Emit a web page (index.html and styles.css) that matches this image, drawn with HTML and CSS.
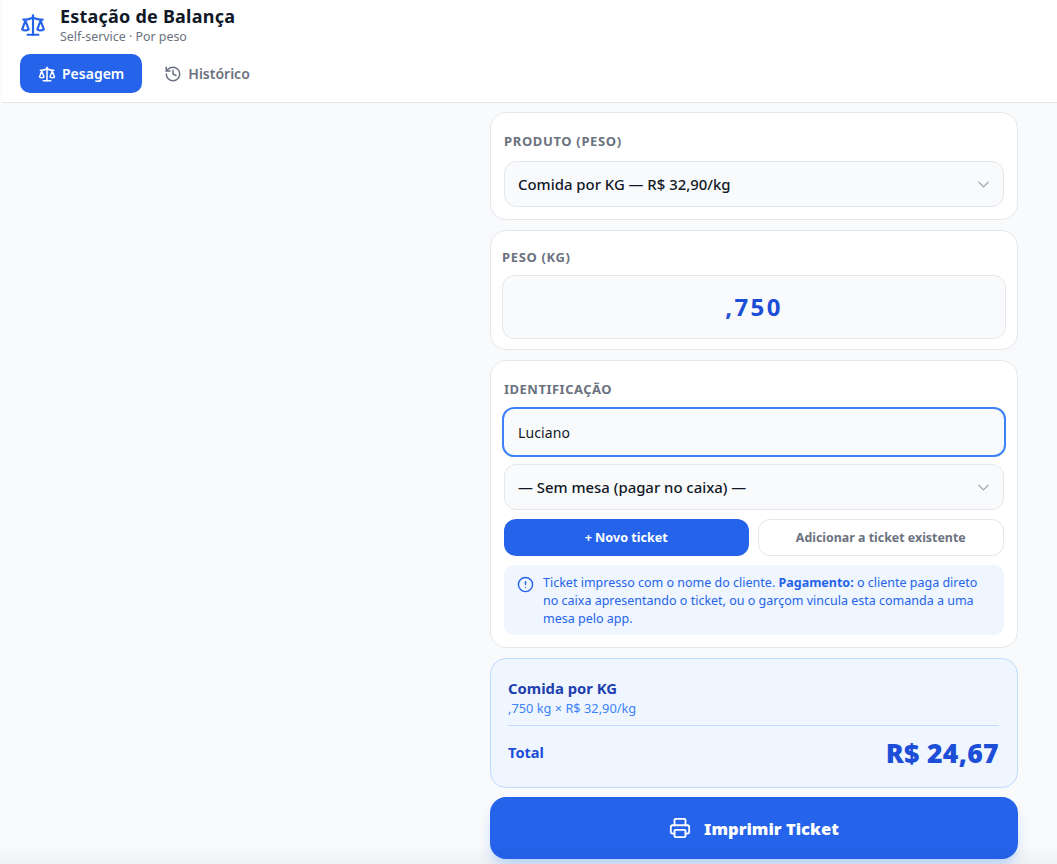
FILE: index.html
```
<!DOCTYPE html>
<html lang="pt-BR">
<head>
<meta charset="utf-8">
<title>Estação de Balança</title>
<link rel="stylesheet" href="styles.css">
</head>
<body>
<header class="topbar">
  <div class="brand">
    <svg class="brand-icon" viewBox="0 0 24 24" fill="none" stroke="currentColor" stroke-width="2" stroke-linecap="round" stroke-linejoin="round"><path d="m16 16 3-8 3 8c-.87.65-1.92 1-3 1s-2.13-.35-3-1Z"/><path d="m2 16 3-8 3 8c-.87.65-1.92 1-3 1s-2.13-.35-3-1Z"/><path d="M7 21h10"/><path d="M12 3v18"/><path d="M3 7h2c2 0 5-1 7-2 2 1 5 2 7 2h2"/></svg>
    <div>
      <h1 class="brand-title">Estação de Balança</h1>
      <p class="brand-sub">Self-service · Por peso</p>
    </div>
  </div>
  <nav class="tabs">
    <a class="tab tab-active"><svg class="tab-icon" viewBox="0 0 24 24" fill="none" stroke="currentColor" stroke-width="2" stroke-linecap="round" stroke-linejoin="round"><path d="m16 16 3-8 3 8c-.87.65-1.92 1-3 1s-2.13-.35-3-1Z"/><path d="m2 16 3-8 3 8c-.87.65-1.92 1-3 1s-2.13-.35-3-1Z"/><path d="M7 21h10"/><path d="M12 3v18"/><path d="M3 7h2c2 0 5-1 7-2 2 1 5 2 7 2h2"/></svg>Pesagem</a>
    <a class="tab tab-idle"><svg class="tab-icon" viewBox="0 0 24 24" fill="none" stroke="currentColor" stroke-width="2" stroke-linecap="round" stroke-linejoin="round"><path d="M3 12a9 9 0 1 0 9-9 9.75 9.75 0 0 0-6.74 2.74L3 8"/><path d="M3 3v5h5"/><path d="M12 7v5l4 2"/></svg>Histórico</a>
  </nav>
</header>
<main class="page">
  <div class="column">
    <section class="card card-product">
      <div class="label">PRODUTO (PESO)</div>
      <div class="field select"><span>Comida por KG — R$ 32,90/kg</span><svg class="chev" viewBox="0 0 24 24" fill="none" stroke="currentColor" stroke-width="1.6" stroke-linecap="round" stroke-linejoin="round"><path d="m6 9 6 6 6-6"/></svg></div>
    </section>
    <section class="card card-weight">
      <div class="label">PESO (KG)</div>
      <div class="weight">,750</div>
    </section>
    <section class="card card-id">
      <div class="label">IDENTIFICAÇÃO</div>
      <div class="field-input">Luciano</div>
      <div class="field select"><span>— Sem mesa (pagar no caixa) —</span><svg class="chev" viewBox="0 0 24 24" fill="none" stroke="currentColor" stroke-width="1.6" stroke-linecap="round" stroke-linejoin="round"><path d="m6 9 6 6 6-6"/></svg></div>
      <div class="actions">
        <button class="btn btn-primary">+ Novo ticket</button>
        <button class="btn btn-outline">Adicionar a ticket existente</button>
      </div>
      <div class="note">
        <svg class="note-icon" viewBox="0 0 24 24" fill="none" stroke="currentColor" stroke-width="2" stroke-linecap="round" stroke-linejoin="round"><circle cx="12" cy="12" r="10"/><path d="M12 8v4"/><path d="M12 16h.01"/></svg>
        <p>Ticket impresso com o nome do cliente. <strong>Pagamento:</strong> o cliente paga direto no caixa apresentando o ticket, ou o garçom vincula esta comanda a uma mesa pelo app.</p>
      </div>
    </section>
    <section class="summary">
      <div class="sum-name">Comida por KG</div>
      <div class="sum-detail">,750 kg × R$ 32,90/kg</div>
      <div class="sum-total">
        <span class="sum-label">Total</span>
        <span class="sum-value">R$ 24,67</span>
      </div>
    </section>
    <button class="print"><svg class="print-icon" viewBox="0 0 24 24" fill="none" stroke="currentColor" stroke-width="2" stroke-linecap="round" stroke-linejoin="round"><path d="M6 18H4a2 2 0 0 1-2-2v-5a2 2 0 0 1 2-2h16a2 2 0 0 1 2 2v5a2 2 0 0 1-2 2h-2"/><path d="M6 9V3a1 1 0 0 1 1-1h10a1 1 0 0 1 1 1v6"/><rect x="6" y="14" width="12" height="8" rx="1"/></svg>Imprimir Ticket</button>
  </div>
</main>
</body>
</html>
```
FILE: styles.css
```
* { box-sizing: border-box; }
html, body { margin: 0; height: 864px; overflow: hidden; }
body { background: #f9fafb; font-family: "Noto Sans", sans-serif; color: #111827; }
body::after { content: ""; position: fixed; left: 0; right: 0; bottom: 0; height: 20px; background: linear-gradient(rgba(0, 0, 0, 0), rgba(0, 0, 0, 0.035)); pointer-events: none; }
.topbar { margin-left: 2px; height: 103px; background: #fff; border-bottom: 1px solid #e5e7eb; padding: 5px 18px 0; }
.brand { display: flex; align-items: center; gap: 14px; height: 39px; }
.brand-icon { width: 26px; height: 26px; color: #2563eb; flex: none; }
.brand-title { margin: 0 0 2px; font-size: 18px; line-height: 22px; font-weight: 700; letter-spacing: 0.22px; color: #111827; }
.brand-sub { margin: 0; font-size: 12.4px; line-height: 16px; color: #6b7280; }
.tabs { display: flex; gap: 5px; margin-top: 10px; }
.tab { display: flex; align-items: center; gap: 6px; height: 39px; padding: 0 18px; border-radius: 10px; font-size: 14px; font-weight: 600; color: #6b7280; }
.tab-active { background: #2563eb; color: #fff; }
.tab-idle { padding-left: 17px; }
.tab-icon { width: 18px; height: 18px; }
.page { display: flex; justify-content: flex-end; padding: 9px 39px 0 0; }
.column { width: 528px; display: flex; flex-direction: column; gap: 10px; }
.card { background: #fff; border: 1px solid #e5e7eb; border-radius: 16px; }
.card-product { height: 108px; padding: 18px 13px 0; }
.card-weight { height: 120px; padding: 16px 11px 0; }
.card-id { height: 288px; padding: 18px 13px 0; }
.label { margin-bottom: 10px; font-size: 13px; line-height: 20px; font-weight: 700; letter-spacing: 0.65px; color: #6b7280; }
.card-weight .label { margin-bottom: 8px; }
.card-id .label { margin-bottom: 8px; letter-spacing: 0.5px; }
.field { background: #f9fafb; border: 1px solid #e5e7eb; border-radius: 12px; }
.select { display: flex; align-items: center; justify-content: space-between; height: 46px; padding: 0 10px 0 13px; font-size: 14.9px; font-weight: 500; color: #111827; }
.chev { width: 19px; height: 19px; color: #9ca3af; }
.weight { height: 64px; padding-bottom: 2px; background: #f9fafb; border: 1px solid #e5e7eb; border-radius: 12px; display: flex; align-items: center; justify-content: center; font-size: 24px; font-weight: 700; letter-spacing: 2.4px; color: #1d4ed8; }
.field-input { height: 50px; margin: 0 -2px 7px; padding: 0 14px; display: flex; align-items: center; background: #f9fafb; border: 2px solid #3b82f6; border-radius: 12px; font-size: 14px; letter-spacing: 0.1px; color: #111827; }
.actions { display: flex; gap: 9px; margin-top: 9px; }
.btn { flex: 1; height: 37px; border-radius: 12px; font-family: inherit; font-size: 12.4px; font-weight: 700; }
.btn-primary { background: #2563eb; border: 0; color: #fff; font-size: 12.6px; }
.btn-outline { background: #fff; border: 1px solid #e5e7eb; color: #6b7280; }
.note { display: flex; gap: 9px; margin-top: 9px; height: 70px; padding: 9px 13px; background: #eff6ff; border-radius: 10px; color: #2563eb; }
.note p { margin: 0; font-size: 12.5px; line-height: 18px; }
.note-icon { width: 17px; height: 17px; flex: none; margin-top: 2px; color: #2563eb; }
.summary { height: 130px; padding: 19px 18px 0 17px; background: #eff6ff; border: 1px solid #bfdbfe; border-radius: 16px; }
.sum-name { font-size: 14.8px; line-height: 20px; font-weight: 700; color: #1e40af; }
.sum-detail { margin-top: 1px; font-size: 12.8px; line-height: 18px; color: #3b82f6; }
.sum-total { display: flex; justify-content: space-between; align-items: center; margin-top: 8px; padding-top: 9px; border-top: 1px solid #bfdbfe; }
.sum-label { margin-top: -2px; font-size: 14.6px; font-weight: 700; color: #1d4ed8; }
.sum-value { font-size: 26.6px; font-weight: 900; letter-spacing: 0.3px; color: #1d4ed8; }
.print { height: 62px; margin-top: -1px; display: flex; align-items: center; justify-content: center; gap: 13px; background: #2563eb; border: 0; border-radius: 16px; font-family: inherit; font-size: 16.6px; font-weight: 900; color: #fff; box-shadow: 0 10px 15px -3px #bfdbfe, 0 4px 6px -4px #bfdbfe; }
.print-icon { width: 22px; height: 22px; }
```
